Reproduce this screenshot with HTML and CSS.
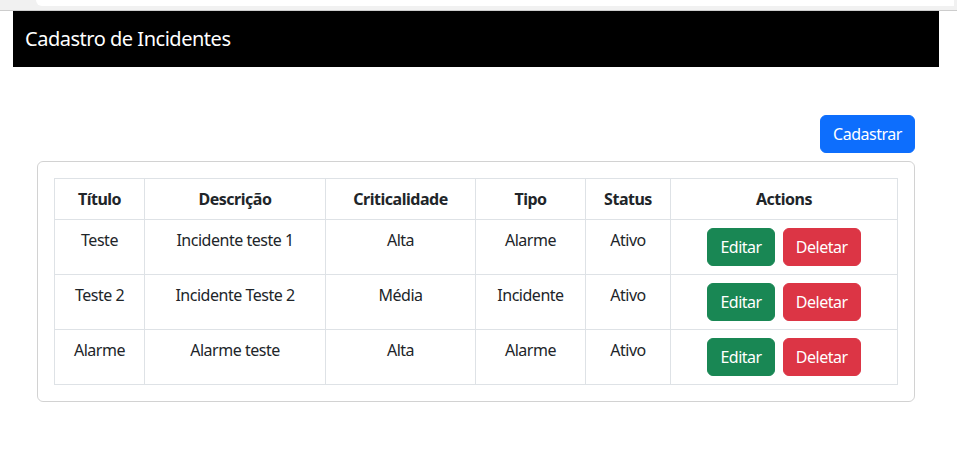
FILE: index.html
```html
<!DOCTYPE html>
<html lang="pt-BR">
<head>
<meta charset="utf-8">
<title>Cadastro de Incidentes</title>
<link rel="stylesheet" href="styles.css">
</head>
<body>
<div class="chrome"><div class="chrome-tab"></div></div>
<nav class="navbar"><span class="brand">Cadastro de Incidentes</span></nav>
<main class="page">
  <div class="toolbar"><button class="btn btn-primary">Cadastrar</button></div>
  <div class="card">
    <table class="table">
      <colgroup>
        <col class="c-titulo"><col class="c-desc"><col class="c-crit"><col class="c-tipo"><col class="c-status"><col class="c-actions">
      </colgroup>
      <thead>
        <tr><th>Título</th><th>Descrição</th><th>Criticalidade</th><th>Tipo</th><th>Status</th><th>Actions</th></tr>
      </thead>
      <tbody>
        <tr><td>Teste</td><td>Incidente teste 1</td><td>Alta</td><td>Alarme</td><td>Ativo</td><td><div class="actions"><button class="btn btn-success">Editar</button><button class="btn btn-danger">Deletar</button></div></td></tr>
        <tr><td>Teste 2</td><td>Incidente Teste 2</td><td>Média</td><td>Incidente</td><td>Ativo</td><td><div class="actions"><button class="btn btn-success">Editar</button><button class="btn btn-danger">Deletar</button></div></td></tr>
        <tr><td>Alarme</td><td>Alarme teste</td><td>Alta</td><td>Alarme</td><td>Ativo</td><td><div class="actions"><button class="btn btn-success">Editar</button><button class="btn btn-danger">Deletar</button></div></td></tr>
      </tbody>
    </table>
  </div>
</main>
</body>
</html>
```
FILE: styles.css
```css
* { box-sizing: border-box; }
html, body { margin: 0; padding: 0; background: #fff; }
body {
  font-family: "Noto Sans", "Segoe UI", Roboto, sans-serif;
  font-size: 16px;
  line-height: 1.5;
  letter-spacing: -0.03em;
  color: #212529;
}
.chrome {
  height: 11px;
  background: #f1f1f1;
  border-bottom: 1px solid #cdcdcd;
  padding-left: 36px;
  padding-right: 3px;
}
.chrome-tab {
  height: 6px;
  background: #fff;
  border-bottom-left-radius: 6px;
}
.navbar {
  margin: 0 18px 0 13px;
  height: 56px;
  background: #000;
  display: flex;
  align-items: center;
  padding: 0 12px;
}
.brand {
  color: #fff;
  font-size: 20px;
  line-height: 30px;
}
.page {
  padding: 48px 42px 0 37px;
}
.toolbar {
  display: flex;
  justify-content: flex-end;
  margin-bottom: 8px;
}
.btn {
  font-family: inherit;
  font-size: 16px;
  line-height: 24px;
  letter-spacing: inherit;
  padding: 6px 12px;
  border: 1px solid transparent;
  border-radius: 6px;
  color: #fff;
  cursor: pointer;
}
.btn-primary { background: #0d6efd; border-color: #0d6efd; }
.btn-success { background: #198754; border-color: #198754; }
.btn-danger { background: #dc3545; border-color: #dc3545; }
.card {
  border: 1px solid rgba(0,0,0,0.175);
  border-radius: 6px;
  padding: 16px;
}
.table {
  width: 100%;
  border-collapse: collapse;
  table-layout: fixed;
}
.table th, .table td {
  border: 1px solid #dee2e6;
  padding: 8px;
  text-align: center;
  vertical-align: top;
}
.table th { font-weight: 700; }
.c-titulo { width: 90px; }
.c-desc { width: 181px; }
.c-crit { width: 150px; }
.c-tipo { width: 110px; }
.c-status { width: 85px; }
.c-actions { width: 227px; }
.actions {
  display: flex;
  justify-content: center;
  gap: 8px;
}
```
